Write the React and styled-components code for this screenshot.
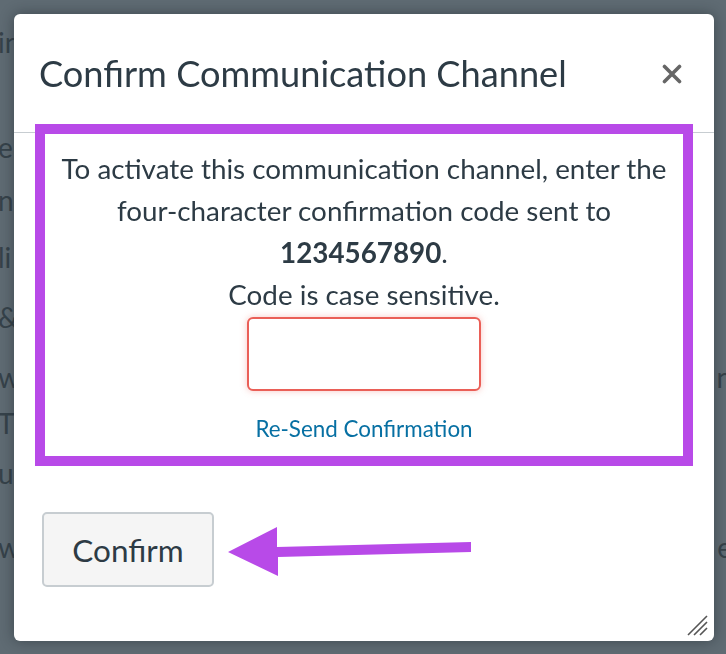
import React from "react";
import styled, { createGlobalStyle } from "styled-components";

const Global = createGlobalStyle`
  html, body { margin: 0; padding: 0; }
  body {
    width: 726px;
    height: 654px;
    overflow: hidden;
    background: #5f6b73;
    font-family: Lato, "Open Sans", sans-serif;
  }
`;

const Page = styled.div`
  display: flex;
  flex-direction: column;
  width: 726px;
  height: 654px;
  color: #36424a;
  font-size: 28px;
  line-height: 34px;
`;

const PageRow = styled.div`
  display: flex;
  justify-content: space-between;
  margin-top: ${(p) => p.$gap}px;
`;

const Frag = styled.span`
  margin-left: ${(p) => (p.$right ? 0 : -2)}px;
  margin-right: ${(p) => (p.$right ? -6 : 0)}px;
`;

const Overlay = styled.div`
  position: fixed;
  inset: 0;
  padding: 14px 12px 13px 14px;
  display: flex;
`;

const Dialog = styled.div`
  position: relative;
  flex: 1;
  display: flex;
  flex-direction: column;
  background: #ffffff;
  border-radius: 6px;
  box-shadow: 0 0 14px rgba(20, 28, 34, 0.45);
`;

const Header = styled.div`
  height: 118px;
  display: flex;
  align-items: center;
  justify-content: space-between;
  padding: 0 32px 0 25px;
  border-bottom: 1px solid #c7cdd1;
`;

const Title = styled.h2`
  margin: 0;
  font-weight: 400;
  font-size: 36.2px;
  color: #2d3b45;
`;

const CloseButton = styled.button`
  border: 0;
  background: none;
  padding: 0;
  width: 20px;
  height: 20px;
  display: flex;
  align-items: center;
  justify-content: center;
  margin-top: 1px;
`;

const Highlight = styled.div`
  position: relative;
  z-index: 1;
  margin: -9px 21px 0 21px;
  border: 10px solid #b84ae8;
  padding: 14px 4px 11px;
  display: flex;
  flex-direction: column;
  align-items: center;
  text-align: center;
  color: #2d3b45;
`;

const Message = styled.p`
  margin: 0;
  font-size: 27.8px;
  line-height: 42px;
  white-space: nowrap;
`;

const Strong = styled.strong`
  font-weight: 700;
`;

const CodeInput = styled.input`
  box-sizing: border-box;
  width: 234px;
  height: 74px;
  margin-top: 1px;
  border: 2px solid #ea5f57;
  border-radius: 6px;
  box-shadow: 0 0 7px rgba(234, 95, 87, 0.35);
  outline: none;
  background: #fff;
`;

const ResendLink = styled.a`
  margin-top: 21px;
  font-size: 22.4px;
  line-height: 33px;
  color: #0770a3;
  text-decoration: none;
`;

const Footer = styled.div`
  display: flex;
  align-items: center;
  padding: 46px 0 0 28px;
`;

const ConfirmButton = styled.button`
  box-sizing: border-box;
  width: 172px;
  height: 75px;
  background: #f5f5f5;
  border: 2px solid #c7cdd1;
  border-radius: 5px;
  font-family: Lato, "Open Sans", sans-serif;
  font-size: 31.5px;
  color: #2d3b45;
  padding: 0;
`;

const Arrow = styled.svg`
  margin-left: 14px;
  margin-top: 4px;
  display: block;
`;

const Grip = styled.svg`
  position: absolute;
  right: 6px;
  bottom: 5px;
`;

export default function App() {
  return (
    <>
      <Global />
      <Page>
        <PageRow $gap={25}><Frag>in</Frag></PageRow>
        <PageRow $gap={71}><Frag>e</Frag></PageRow>
        <PageRow $gap={19}><Frag>ng</Frag></PageRow>
        <PageRow $gap={23}><Frag>li</Frag></PageRow>
        <PageRow $gap={26}><Frag>&amp;</Frag></PageRow>
        <PageRow $gap={26}><Frag>w</Frag><Frag $right>n</Frag></PageRow>
        <PageRow $gap={12}><Frag>T</Frag></PageRow>
        <PageRow $gap={16}><Frag>ur</Frag></PageRow>
        <PageRow $gap={40}><Frag>w</Frag><Frag $right>e</Frag></PageRow>
      </Page>
      <Overlay>
        <Dialog role="dialog" aria-label="Confirm Communication Channel">
          <Header>
            <Title>Confirm Communication Channel</Title>
            <CloseButton aria-label="Close">
              <svg width="20" height="20" viewBox="0 0 20 20">
                <path d="M2.5 2.5 L17.5 17.5 M17.5 2.5 L2.5 17.5" stroke="#666" strokeWidth="3.6" strokeLinecap="round" />
              </svg>
            </CloseButton>
          </Header>
          <Highlight>
            <Message>
              To activate this communication channel, enter the
              <br />
              four-character confirmation code sent to
              <br />
              <Strong>1234567890</Strong>.
              <br />
              Code is case sensitive.
            </Message>
            <CodeInput type="text" aria-label="Code" />
            <ResendLink href="#">Re-Send Confirmation</ResendLink>
          </Highlight>
          <Footer>
            <ConfirmButton>Confirm</ConfirmButton>
            <Arrow width="244" height="51" viewBox="0 0 244 51">
              <polygon
                points="0,26 49,1 49,21 243,16 243,26 50,31 50,50"
                fill="#b84ae8"
              />
            </Arrow>
          </Footer>
          <Grip width="22" height="22" viewBox="0 0 22 22">
            <path d="M2 21 L21 2 M8 21 L21 8 M14 21 L21 14" stroke="#555" strokeWidth="1.6" />
          </Grip>
        </Dialog>
      </Overlay>
    </>
  );
}
